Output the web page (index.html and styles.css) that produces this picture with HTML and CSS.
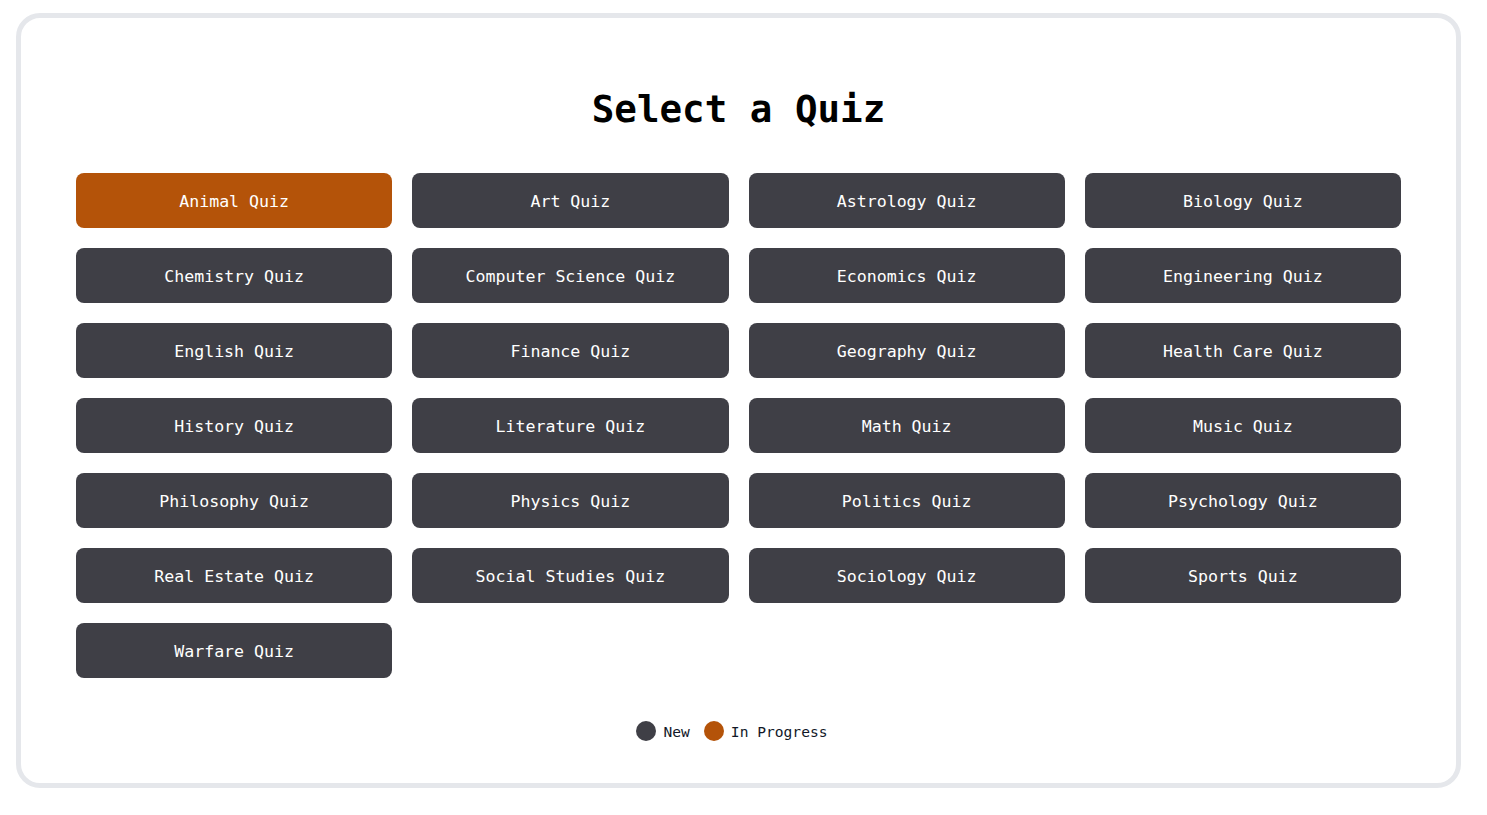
FILE: index.html
```html
<!DOCTYPE html>
<html lang="en">
<head>
<meta charset="utf-8">
<title>Select a Quiz</title>
<link rel="stylesheet" href="styles.css">
</head>
<body>
<main class="card">
  <h1 class="title">Select a Quiz</h1>
  <div class="grid">
    <button class="quiz in-progress">Animal Quiz</button>
    <button class="quiz">Art Quiz</button>
    <button class="quiz">Astrology Quiz</button>
    <button class="quiz">Biology Quiz</button>
    <button class="quiz">Chemistry Quiz</button>
    <button class="quiz">Computer Science Quiz</button>
    <button class="quiz">Economics Quiz</button>
    <button class="quiz">Engineering Quiz</button>
    <button class="quiz">English Quiz</button>
    <button class="quiz">Finance Quiz</button>
    <button class="quiz">Geography Quiz</button>
    <button class="quiz">Health Care Quiz</button>
    <button class="quiz">History Quiz</button>
    <button class="quiz">Literature Quiz</button>
    <button class="quiz">Math Quiz</button>
    <button class="quiz">Music Quiz</button>
    <button class="quiz">Philosophy Quiz</button>
    <button class="quiz">Physics Quiz</button>
    <button class="quiz">Politics Quiz</button>
    <button class="quiz">Psychology Quiz</button>
    <button class="quiz">Real Estate Quiz</button>
    <button class="quiz">Social Studies Quiz</button>
    <button class="quiz">Sociology Quiz</button>
    <button class="quiz">Sports Quiz</button>
    <button class="quiz">Warfare Quiz</button>
  </div>
  <div class="legend">
    <span class="legend-item"><span class="dot dot-new"></span>New</span>
    <span class="legend-item"><span class="dot dot-progress"></span>In Progress</span>
  </div>
</main>
</body>
</html>
```
FILE: styles.css
```css
* { box-sizing: border-box; }
html, body { margin: 0; padding: 0; background: #ffffff; }
body {
  font-family: "DejaVu Sans Mono", "Liberation Mono", monospace;
  padding: 13px 26px 0 16px;
}
.card {
  width: 1445px;
  height: 775px;
  border: 5px solid #e5e7eb;
  border-radius: 24px;
  padding: 0 55px;
  display: flex;
  flex-direction: column;
}
.title {
  margin: 63px 0 0;
  height: 56px;
  line-height: 56px;
  text-align: center;
  font-size: 37.5px;
  font-weight: bold;
  color: #000;
}
.grid {
  margin-top: 36px;
  display: grid;
  grid-template-columns: repeat(4, 1fr);
  gap: 20px;
}
.quiz {
  height: 55px;
  border: none;
  border-radius: 8px;
  background: #3f3f46;
  color: #ffffff;
  font-family: "DejaVu Sans Mono", "Liberation Mono", monospace;
  font-size: 16.6px;
  padding: 2px 0 0;
  cursor: pointer;
}
.quiz.in-progress { background: #b45309; }
.legend {
  margin-top: 42px;
  padding-right: 13px;
  display: flex;
  justify-content: center;
  gap: 14px;
  font-size: 14.6px;
  color: #111827;
}
.legend-item {
  display: flex;
  align-items: center;
  gap: 7px;
  height: 22px;
}
.dot {
  width: 20px;
  height: 20px;
  border-radius: 50%;
  display: inline-block;
}
.dot-new { background: #3f3f46; }
.dot-progress { background: #b45309; }
```
